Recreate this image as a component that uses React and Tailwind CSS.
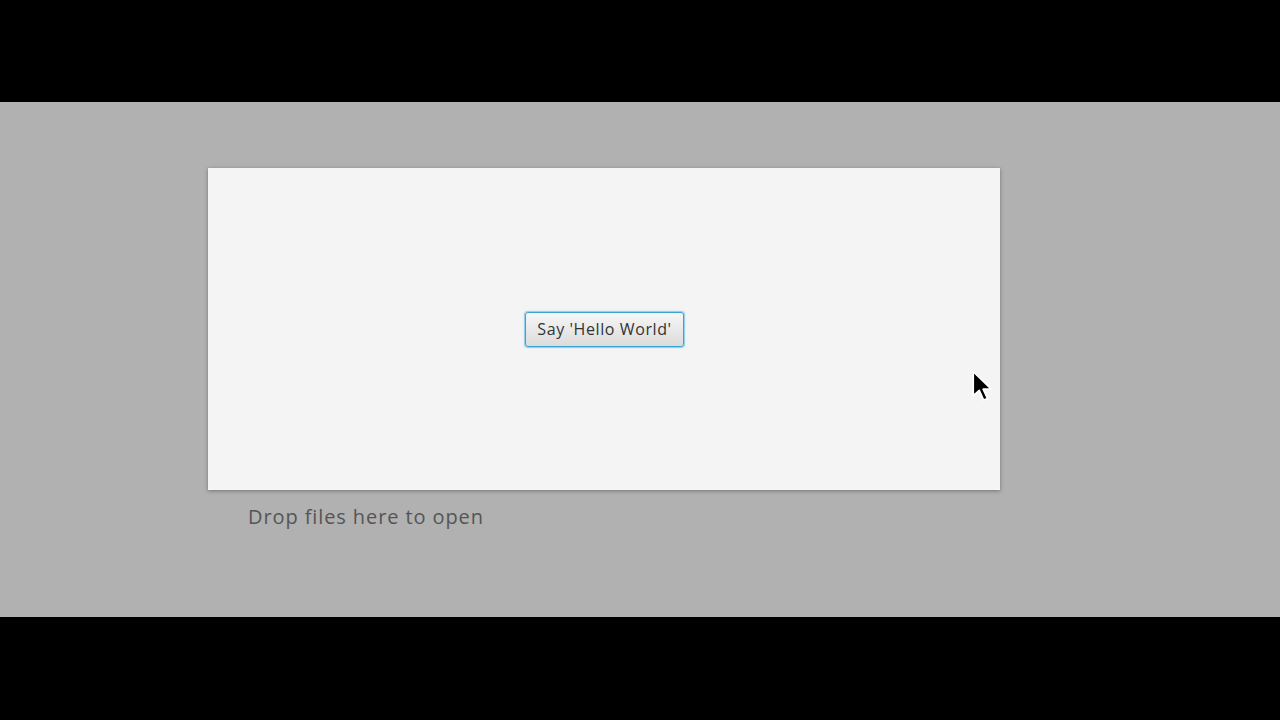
import React from 'react';

const App = () => {
  return (
    <div className="w-[1280px] h-[720px] bg-black flex flex-col font-['Liberation_Sans',Arial,sans-serif]">
      <div className="h-[102px] shrink-0" />
      <div className="h-[515px] shrink-0 bg-[#b1b1b1] relative pl-[208px] pt-[66px]">
        <div className="w-[792px] h-[322px] bg-[#f4f4f4] shadow-[0_1px_4px_rgba(0,0,0,0.35)] flex items-center justify-center pb-[2px]">
          <button className="w-[159px] h-[35px] rounded-[3px] border border-[#3aa5d4] shadow-[0_0_0_1px_rgba(120,200,235,0.7),0_0_3px_rgba(90,190,230,0.6)] bg-gradient-to-b from-[#f6f6f6] to-[#dcdcdc] text-[16px] tracking-[0.6px] text-[#333] font-['Open_Sans',sans-serif] mt-[2px] ml-[1px]">
            Say 'Hello World'
          </button>
        </div>
        <p className="mt-[12px] ml-[40px] text-[20px] text-[#555] font-['Open_Sans',sans-serif] tracking-[0.9px]">
          Drop files here to open
        </p>
        <svg className="absolute left-[970px] top-[267px]" width="24" height="36" viewBox="0 0 22 32">
          <path d="M3 2 L3 24 L8.5 19 L12.5 28 L16 26.5 L12 18 L19.5 18 Z" fill="#000" stroke="#fff" strokeWidth="1.5" strokeLinejoin="round" />
        </svg>
      </div>
      <div className="flex-1" />
    </div>
  );
};

export default App;
